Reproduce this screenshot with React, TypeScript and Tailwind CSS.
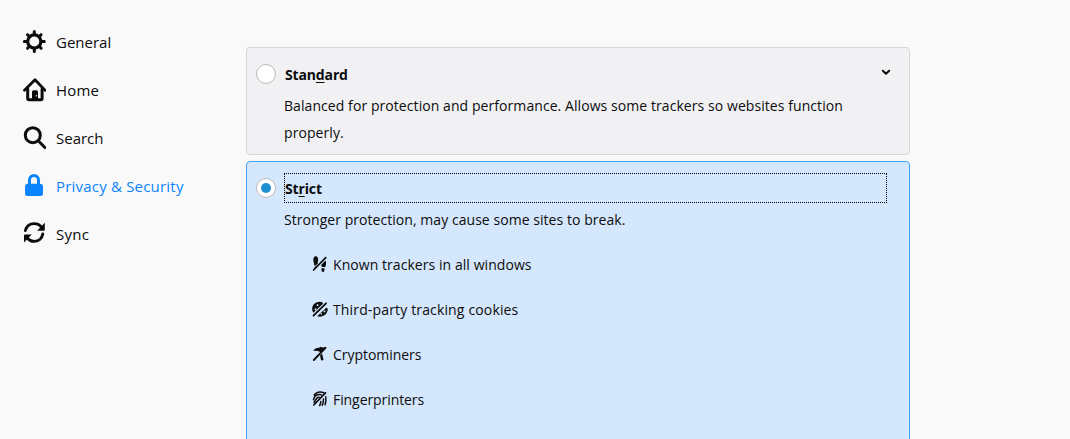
import type { ReactNode } from 'react';

function GearIcon() {
  return (
    <svg width="24" height="24" viewBox="0 0 24 24" fill="none" stroke="#0c0c0d">
      <circle cx="12.300" cy="11.500" r="6.600" strokeWidth="3.200" />
      <path
        strokeWidth="3"
        strokeLinecap="round"
        d="M12.300 1.500v3M12.300 18.500v3M2.300 11.500h3M19.300 11.500h3M5.500 4.700l1.600 1.600M17.500 16.700l1.600 1.600M5.500 18.300l1.600-1.600M17.500 6.300l1.600-1.600"
      />
    </svg>
  );
}

function HomeIcon() {
  return (
    <svg width="24" height="24" viewBox="0 0 24 24" fill="none" stroke="#0c0c0d" strokeLinecap="round" strokeLinejoin="round">
      <path strokeWidth="2.800" d="M2.500 12.300 13 1.800l10.100 10.500" />
      <path strokeWidth="3" d="M5.700 11v9.500q0 1.200 1.200 1.200h12q1.200 0 1.200-1.200V11" />
      <path fill="#0c0c0d" stroke="none" d="M10 22v-8q0-1.700 1.700-1.700h2.600q1.700 0 1.700 1.700V22z" />
      <path fill="#f9f9fa" stroke="none" d="M13.800 17h1v1.600h-1z" />
    </svg>
  );
}

function SearchIcon() {
  return (
    <svg width="24" height="24" viewBox="0 0 24 24" fill="none" stroke="#0c0c0d" strokeWidth="3">
      <circle cx="10.800" cy="9.200" r="7.500" />
      <path strokeLinecap="round" d="m16.500 15 6.400 6.500" />
    </svg>
  );
}

function LockIcon() {
  return (
    <svg width="24" height="24" viewBox="0 0 24 24">
      <path
        fill="#0a84ff"
        d="M18 9.800V6A6 6 0 0 0 6 6v3.800a3 3 0 0 0-3 3V19.500a2.500 2.500 0 0 0 2.500 2.500h13a2.500 2.500 0 0 0 2.500-2.500v-6.700a3 3 0 0 0-3-3zM9 6a3 3 0 0 1 6 0v3.800H9z"
      />
    </svg>
  );
}

function SyncIcon() {
  return (
    <svg width="24" height="24" viewBox="0 0 24 24">
      <path
        fill="none"
        stroke="#0c0c0d"
        strokeWidth="2.900"
        strokeLinecap="round"
        d="M3.400 8.500C4.500 4.200 8 1.600 12.200 1.600c3.200 0 5.800 1.300 7.300 3.600M20.800 12c-.8 4.500-4.400 7.400-8.600 7.400-3.200 0-5.700-1.500-7.300-4"
      />
      <path fill="#0c0c0d" d="M22.800.8v6.900q0 1-1 1h-6.700zM2 20.500v-7q0-1 1-1h6.800z" />
    </svg>
  );
}

function TrackerIcon() {
  return (
    <svg width="16" height="16" viewBox="0 0 16 16" fill="#0c0c0d" className="overflow-visible">
      <path d="M1.300 3.200C1.200 1 2-.7 3.700-.7 5.400-.7 6.300.9 6.100 3.200L5.600 7 2.500 9z" />
      <path d="M2.300 10.200 5 8.500v1.800a1.400 1.400 0 0 1-2.700 0zM9.300 7.700l4.200-4.200c1 1.500.7 4.500-.4 6.700l-3.500-.5zM9.600 11l3 .5-.3 2.200a1.400 1.400 0 0 1-2.800-.5z" />
      <path d="M1.600 13 13.700.6" fill="none" stroke="#0c0c0d" strokeWidth="1.700" strokeLinecap="round" />
    </svg>
  );
}

function CookieIcon() {
  return (
    <svg width="16" height="16" viewBox="0 0 16 16" className="overflow-visible">
      <path fill="#0c0c0d" d="M10.300.300C6-1.500 0 1.500.2 7.200Q.3 9.500 1.300 10.800L11 1.700zM14.500 5.500 5.200 14.200c4.800 1.800 10.500-1.700 10.600-7.200q-.5-1-1.300-1.500z" />
      <path fill="#d5e7fd" d="M2.700 6.500h1.700v1.700H2.700zM4.800 2.300h1.600v1.600H4.800zM11.600 8.600h1.700v1.600h-1.700zM8.500 11.200h1.500v1.300H8.500z" />
      <path d="M1.500 13.700 14 1.300" fill="none" stroke="#0c0c0d" strokeWidth="1.800" strokeLinecap="round" />
    </svg>
  );
}

function MinerIcon() {
  return (
    <svg width="16" height="16" viewBox="0 0 16 16" className="overflow-visible">
      <path fill="#0c0c0d" d="M1.300 4C2.500 1.700 4.500.7 7.200.8L8.500-.3 10.300.6 14 .2 9 5.700 6.800 4.200Q4 3.600 1.300 4zM8 8.500 10 6.500 11.500 12.500q-.6 1.500-2.500.5z" />
      <path d="M1.800 13 13.500.8" fill="none" stroke="#0c0c0d" strokeWidth="1.900" strokeLinecap="round" />
    </svg>
  );
}

function FingerprintIcon() {
  return (
    <svg width="16" height="16" viewBox="0 0 16 16" fill="none" stroke="#0c0c0d" strokeWidth="1.500" strokeLinecap="round" className="overflow-visible">
      <path d="M2.200 3.200C3.600.9 6-.1 8-.1s3 .4 3.800 1M1.500 7.700C2.200 4.300 5 2.500 7.500 2.500q1.300 0 2 .4M2.100 10.500c1.500-2 1.500-5 5-5.300M13.800 4.800q.5 4-.7 8M11.500 7q0 4-1.300 6.300M8.800 9.600q-.2 2.200-1.200 4" />
      <path d="M1.800 13 13.500.8" strokeWidth="1.700" />
    </svg>
  );
}

function NavItem({ icon, label, tracking, active = false }: { icon: ReactNode; label: string; tracking: string; active?: boolean }) {
  return (
    <a className={`flex h-12 items-center gap-[10px] text-[15px] ${active ? 'text-[#0a84ff]' : 'text-[#0c0c0d]'}`}>
      {icon}
      <span className={`whitespace-nowrap ${tracking}`}>{label}</span>
    </a>
  );
}

function Radio({ checked = false }: { checked?: boolean }) {
  return (
    <span className="flex size-5 shrink-0 items-center justify-center rounded-full border border-[#b8b8b9] bg-white">
      {checked && <span className="size-[10px] rounded-full bg-[#1e90d2]" />}
    </span>
  );
}

function Blocked({ icon, label, tracking }: { icon: ReactNode; label: string; tracking: string }) {
  return (
    <li className="flex h-[45px] items-center gap-[5px]">
      {icon}
      <span className={`whitespace-nowrap ${tracking}`}>{label}</span>
    </li>
  );
}

export default function App() {
  return (
    <div className="flex h-[439px] w-[1070px] overflow-hidden bg-[#f9f9fa] font-['Open_Sans','Noto_Sans',sans-serif] text-[14px] text-[#0c0c0d]">
      <nav className="w-[246px] shrink-0 pt-[18px] pl-[22px]">
        <NavItem icon={<GearIcon />} label="General" tracking="tracking-[0px]" />
        <NavItem icon={<HomeIcon />} label="Home" tracking="tracking-[0.15px]" />
        <NavItem icon={<SearchIcon />} label="Search" tracking="tracking-[0px]" />
        <NavItem icon={<LockIcon />} label="Privacy & Security" tracking="tracking-[0.2px]" active />
        <NavItem icon={<SyncIcon />} label="Sync" tracking="tracking-[0.3px]" />
      </nav>
      <main className="flex w-[664px] flex-col gap-[6px] pt-[47px]">
        <section className="h-[108px] shrink-0 rounded-[4px] border border-[#d7d7db] bg-[#f1f1f3] pr-[17px] pl-[9px]">
          <div className="flex h-[44px] items-center pt-[8px]">
            <Radio />
            <h2 className="ml-2 flex-1 pl-px font-bold tracking-[-0.15px]">
              Stan<span className="underline underline-offset-2">d</span>ard
            </h2>
            <svg width="12" height="12" viewBox="0 0 12 12" className="mb-[5px]">
              <path d="M2.800 4.800 6 7.800l3.200-3" fill="none" stroke="#0c0c0d" strokeWidth="2" strokeLinecap="round" strokeLinejoin="round" />
            </svg>
          </div>
          <p className="pl-7 leading-[27px] whitespace-nowrap tracking-[0.07px]">
            Balanced for protection and performance. Allows some trackers so websites function
            <br />
            properly.
          </p>
        </section>
        <section className="h-[290px] shrink-0 rounded-t-[4px] border border-[#45a1ff] bg-[#d5e7fd] pt-[11px] pl-[9px]">
          <div className="flex items-center">
            <Radio checked />
            <h2 className="ml-2 flex h-[30px] w-[603px] items-center border border-dotted border-black font-bold tracking-[-0.15px]">
              <span>
                St<span className="underline underline-offset-2">r</span>ict
              </span>
            </h2>
          </div>
          <p className="mt-[3px] pl-7 leading-[27px] tracking-[0.05px]">Stronger protection, may cause some sites to break.</p>
          <ul className="mt-[9px] pl-14">
            <Blocked icon={<TrackerIcon />} label="Known trackers in all windows" tracking="tracking-[0.06px]" />
            <Blocked icon={<CookieIcon />} label="Third-party tracking cookies" tracking="tracking-[0.15px]" />
            <Blocked icon={<MinerIcon />} label="Cryptominers" tracking="tracking-[-0.04px]" />
            <Blocked icon={<FingerprintIcon />} label="Fingerprinters" tracking="tracking-[-0.08px]" />
          </ul>
        </section>
      </main>
    </div>
  );
}
